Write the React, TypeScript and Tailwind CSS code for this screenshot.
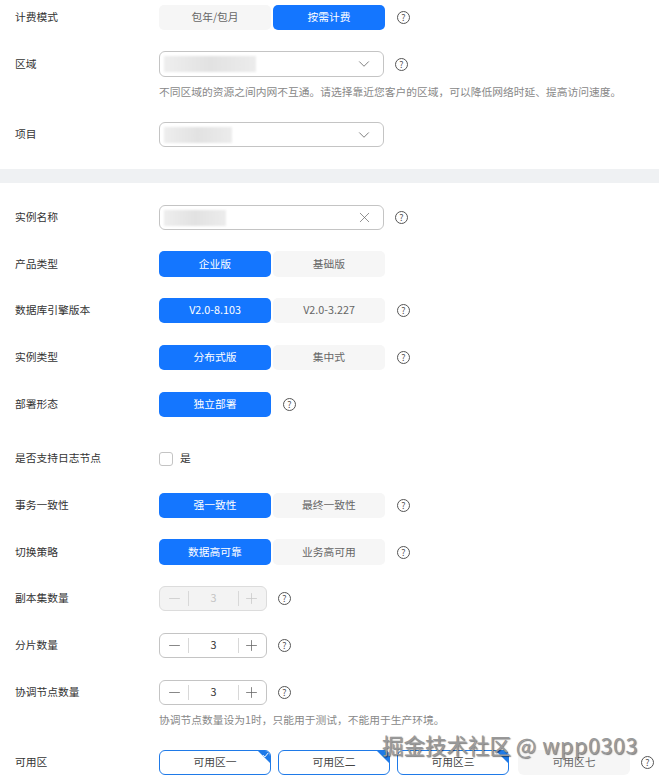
import React from "react";
import { ChevronDown, Minus, Plus, X } from "lucide-react";

const font = "font-['Noto_Sans_CJK_SC','Noto_Sans',sans-serif]";

function Help({ className = "" }: { className?: string }) {
  return (
    <span
      className={`flex h-[13px] w-[13px] shrink-0 items-center justify-center rounded-full border border-[#555] text-[9px] leading-none text-[#555] ${className}`}
    >
      ?
    </span>
  );
}

function Row({
  label,
  className = "",
  children,
}: {
  label: string;
  className?: string;
  children: React.ReactNode;
}) {
  return (
    <div className={`flex h-[25px] items-center ${className}`}>
      <div className="w-[159px] shrink-0 pl-[15px] text-[#333]">{label}</div>
      {children}
    </div>
  );
}

function Seg({
  left,
  right,
  active = "left",
  help = true,
}: {
  left: string;
  right?: string;
  active?: "left" | "right";
  help?: boolean;
}) {
  const on = "bg-[#1476ff] text-white";
  const off = "bg-[#f6f6f6] text-[#666]";
  return (
    <>
      <div className={`flex h-full w-[112px] items-center justify-center rounded-[5px] ${active === "left" ? on : off}`}>
        {left}
      </div>
      {right && (
        <div className={`ml-[2px] flex h-full w-[112px] items-center justify-center rounded-[5px] ${active === "right" ? on : off}`}>
          {right}
        </div>
      )}
      {help && <Help className="ml-[12px]" />}
    </>
  );
}

function Field({ blurW, icon }: { blurW: number; icon: "chevron" | "x" }) {
  return (
    <div className="flex h-full w-[225px] items-center justify-between overflow-hidden rounded-[6px] border border-[#c4c4c4] bg-white pl-[4px] pr-[10px]">
      <div
        className="h-[16px] bg-linear-to-r from-[#eeeeee] via-[#e2e2e2] to-[#ececec] blur-[1px]"
        style={{ width: blurW }}
      />
      {icon === "chevron" ? (
        <ChevronDown size={18} strokeWidth={1.1} className="text-[#666]" />
      ) : (
        <X size={17} strokeWidth={1} className="text-[#666]" />
      )}
    </div>
  );
}

function Stepper({ disabled = false }: { disabled?: boolean }) {
  const border = disabled ? "border-[#dcdcdc] bg-[#f3f3f3]" : "border-[#c4c4c4] bg-white";
  const icon = disabled ? "text-[#c8c8c8]" : "text-[#666]";
  return (
    <>
      <div className={`flex h-[25px] w-[108px] items-center rounded-[6px] border ${border}`}>
        <div className="flex w-[28px] items-center justify-center">
          <Minus size={17} strokeWidth={1.1} className={icon} />
        </div>
        <div className="h-[15px] w-px bg-[#d8d8d8]" />
        <div className={`flex-1 text-center ${disabled ? "text-[#c4c4c4]" : "text-[#333]"}`}>3</div>
        <div className="h-[15px] w-px bg-[#d8d8d8]" />
        <div className="flex w-[27px] items-center justify-center pr-[2px]">
          <Plus size={17} strokeWidth={1.1} className={icon} />
        </div>
      </div>
      <Help className="ml-[11px]" />
    </>
  );
}

function Zone({ name, first = false }: { name: string; first?: boolean }) {
  return (
    <div className="relative flex h-[25px] w-[112px] items-center justify-center overflow-hidden rounded-[6px] border border-[#1f7ae8] bg-white text-[#444]">
      {name}
      <div className="absolute right-0 top-0 h-0 w-0 border-l-[12px] border-t-[12px] border-l-transparent border-t-[#1f7ae8]" />
      {first && (
        <svg className="absolute right-[1px] top-[1px]" width="7" height="6" viewBox="0 0 7 6" fill="none">
          <path d="M0.8 3 L2.8 5 L6.2 1" stroke="#fff" strokeWidth="1" />
        </svg>
      )}
    </div>
  );
}

export default function App() {
  return (
    <div className={`relative h-[781px] w-[659px] overflow-hidden bg-white text-[10.75px] leading-none ${font}`}>
      <div className="pt-[5px]">
        <Row label="计费模式">
          <Seg left="包年/包月" right="按需计费" active="right" />
        </Row>
        <Row label="区域" className="mt-[21px] !h-[26px]">
          <Field blurW={92} icon="chevron" />
          <Help className="ml-[11px]" />
        </Row>
        <div className="ml-[159px] mt-[10px] h-[11px] whitespace-nowrap text-[#888]">
          不同区域的资源之间内网不互通。请选择靠近您客户的区域，可以降低网络时延、提高访问速度。
        </div>
        <Row label="项目" className="mt-[24px]">
          <Field blurW={68} icon="chevron" />
        </Row>
      </div>

      <div className="mt-[22px] h-[14px] bg-[#eff1f3]" />

      <div className="pt-[22px]">
        <Row label="实例名称">
          <Field blurW={62} icon="x" />
          <Help className="ml-[11px]" />
        </Row>
        <Row label="产品类型" className="mt-[21px] !h-[26px]">
          <Seg left="企业版" right="基础版" help={false} />
        </Row>
        <Row label="数据库引擎版本" className="mt-[21px]">
          <Seg left="V2.0-8.103" right="V2.0-3.227" />
        </Row>
        <Row label="实例类型" className="mt-[22px]">
          <Seg left="分布式版" right="集中式" />
        </Row>
        <Row label="部署形态" className="mt-[22px]">
          <Seg left="独立部署" help />
        </Row>
        <Row label="是否支持日志节点" className="mt-[29px]">
          <div className="h-[14px] w-[14px] rounded-[3px] border border-[#c4c4c4] bg-white" />
          <span className="ml-[7px] text-[#333]">是</span>
        </Row>
        <Row label="事务一致性" className="mt-[22px]">
          <Seg left="强一致性" right="最终一致性" />
        </Row>
        <Row label="切换策略" className="mt-[21px] !h-[26px]">
          <Seg left="数据高可靠" right="业务高可用" />
        </Row>
        <Row label="副本集数量" className="mt-[21px]">
          <Stepper disabled />
        </Row>
        <Row label="分片数量" className="mt-[22px]">
          <Stepper />
        </Row>
        <Row label="协调节点数量" className="mt-[22px]">
          <Stepper />
        </Row>
        <div className="ml-[159px] mt-[10px] h-[11px] whitespace-nowrap text-[#888]">
          协调节点数量设为1时，只能用于测试，不能用于生产环境。
        </div>
        <Row label="可用区" className="mt-[24px]">
          <div className="flex items-center gap-[7px]">
            <Zone name="可用区一" first />
            <Zone name="可用区二" />
            <Zone name="可用区三" />
            <div className="ml-[2px] flex h-[25px] w-[112px] items-center justify-center rounded-[6px] bg-[#f6f6f6] text-[#666]">
              可用区七
            </div>
          </div>
          <Help className="ml-[11px]" />
        </Row>
      </div>

      <div className="absolute left-[382px] top-[731px] whitespace-nowrap text-[21.5px] leading-[28px] text-[#999] [text-shadow:1px_1px_1px_rgba(0,0,0,0.5)]">
        掘金技术社区 <span className="tracking-[0.6px]">@ wpp0303</span>
      </div>
    </div>
  );
}
